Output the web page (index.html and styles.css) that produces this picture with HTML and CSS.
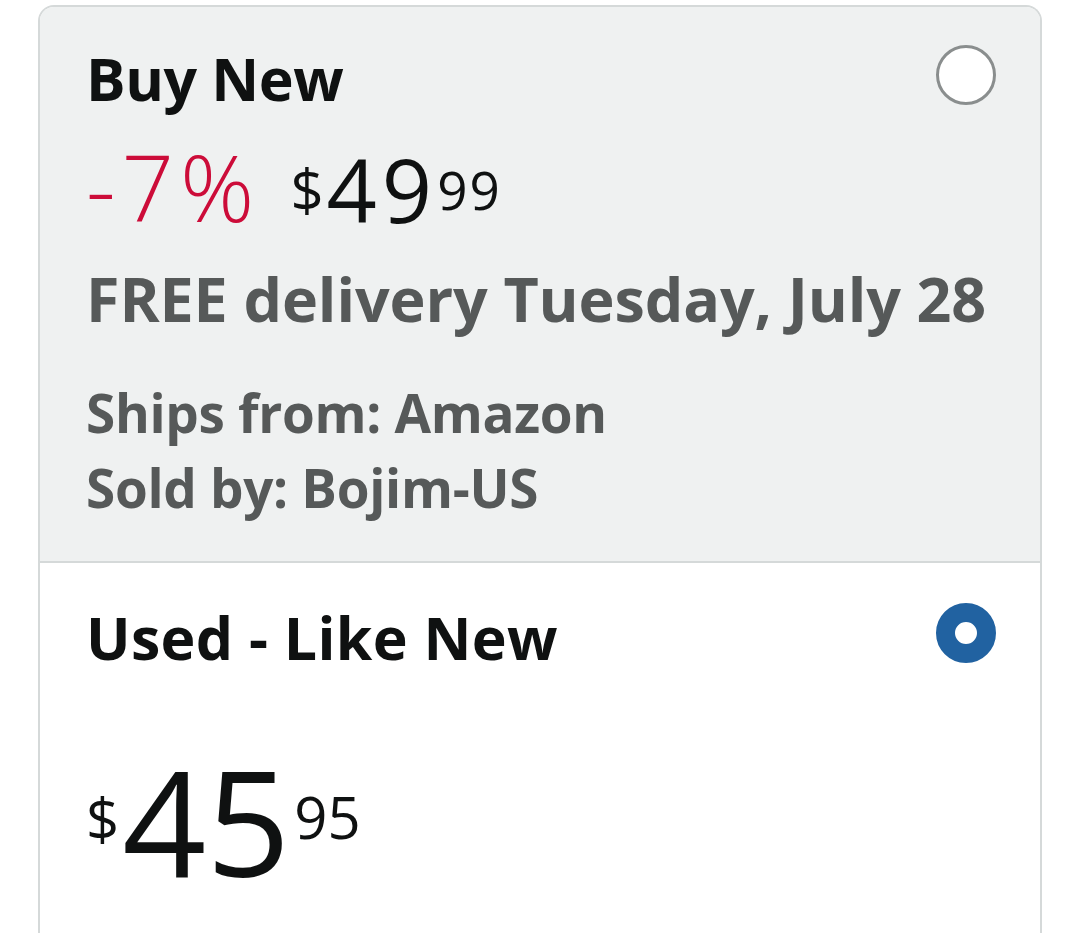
FILE: index.html
```html
<!DOCTYPE html>
<html>
<head>
<meta charset="utf-8">
<link rel="stylesheet" href="styles.css">
</head>
<body>
<div class="card">
  <section class="offer offer-new">
    <div class="head">
      <h2 class="title title-new">Buy New</h2>
      <span class="radio"></span>
    </div>
    <div class="price-row">
      <span class="discount">-7%</span>
      <span class="price"><span class="sym">$</span><span class="whole">49</span><span class="frac">99</span></span>
    </div>
    <p class="delivery">FREE delivery Tuesday, July 28</p>
    <div class="meta-list">
      <p class="meta">Ships from: Amazon</p>
      <p class="meta">Sold by: Bojim-US</p>
    </div>
  </section>
  <section class="offer offer-used">
    <div class="head">
      <h2 class="title title-used">Used - Like New</h2>
      <span class="radio selected"></span>
    </div>
    <div class="big-price">
      <span class="sym">$</span><span class="whole">45</span><span class="frac">95</span>
    </div>
  </section>
</div>
</body>
</html>
```
FILE: styles.css
```css
html, body {
  margin: 0;
  padding: 0;
  background: #ffffff;
  font-family: "Open Sans", "Noto Sans", sans-serif;
  color: #0f1111;
}
body {
  padding: 5px 38px 0 38px;
  height: 933px;
  box-sizing: border-box;
  overflow: hidden;
}
.card {
  border: 2px solid #d5d9d9;
  border-bottom: none;
  border-radius: 16px 16px 0 0;
  overflow: hidden;
  height: 940px;
}
.offer {
  padding: 0 44px 0 46px;
}
.offer-new {
  background: #eff1f1;
  border-bottom: 2px solid #d5d9d9;
  height: 556px;
  box-sizing: border-box;
  padding-top: 33px;
}
.head {
  display: flex;
  justify-content: space-between;
  align-items: flex-start;
  height: 76px;
}
.title {
  margin: 0;
  font-size: 59px;
  font-weight: 700;
  line-height: 76px;
}
.title-new {
  letter-spacing: -0.5px;
}
.title-used {
  letter-spacing: 0.3px;
}
.radio {
  width: 60px;
  height: 60px;
  box-sizing: border-box;
  border-radius: 50%;
  border: 3px solid #8a8e8e;
  background: #ffffff;
  margin-top: 5px;
}
.radio.selected {
  border: 19px solid #2162a1;
  margin-top: 4px;
}
.price-row {
  display: flex;
  align-items: flex-start;
  margin-top: 29px;
  height: 88px;
}
.discount {
  color: #cc0c39;
  font-size: 92px;
  font-weight: 300;
  line-height: 92px;
  letter-spacing: 6px;
  margin-top: -4px;
  margin-right: 30px;
}
.price {
  display: flex;
  align-items: flex-start;
}
.price .sym {
  font-size: 58px;
  line-height: 58px;
  margin-top: 16px;
  margin-right: 3px;
}
.price .whole {
  font-size: 88px;
  line-height: 88px;
  letter-spacing: 5px;
}
.price .frac {
  font-size: 53px;
  line-height: 53px;
  margin-top: 18px;
  letter-spacing: 2px;
}
.delivery {
  margin: 26px 0 0 0;
  color: #565959;
  font-size: 61px;
  font-weight: 700;
  line-height: 80px;
  letter-spacing: -0.1px;
}
.meta-list {
  margin-top: 36px;
}
.meta {
  margin: 0;
  color: #565959;
  font-size: 53px;
  font-weight: 700;
  line-height: 75px;
  letter-spacing: -0.3px;
}
.offer-used {
  padding-top: 36px;
}
.big-price {
  display: flex;
  align-items: flex-start;
  margin-top: 72px;
}
.big-price .sym {
  font-size: 58px;
  line-height: 58px;
  margin-top: 43px;
}
.big-price .whole {
  font-size: 147px;
  line-height: 147px;
  margin: 0 4px 0 3px;
}
.big-price .frac {
  font-size: 58px;
  line-height: 58px;
  margin-top: 41px;
}
```
